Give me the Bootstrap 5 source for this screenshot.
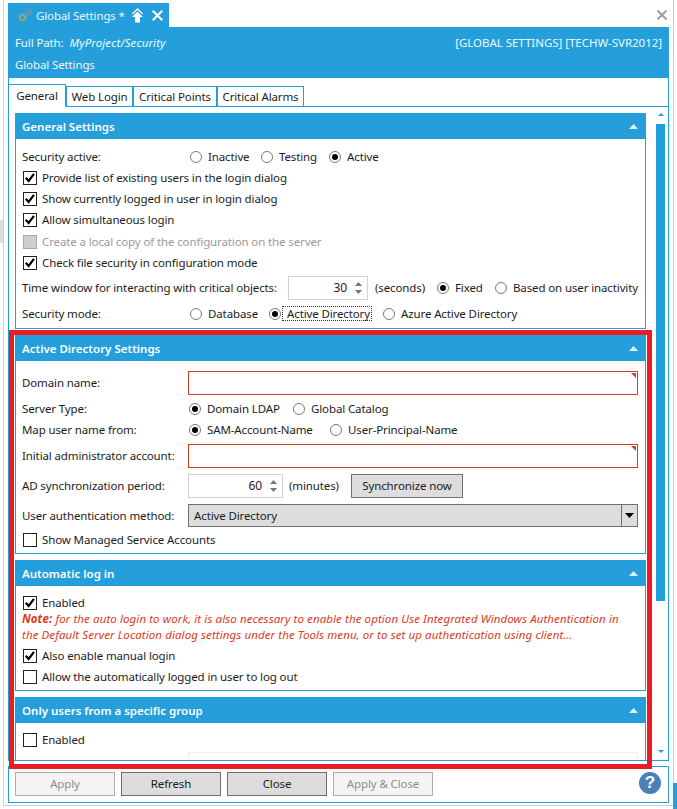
<!DOCTYPE html>
<html>
<head>
<title>Global Settings</title>
<link href="https://cdn.jsdelivr.net/npm/bootstrap@5.3.3/dist/css/bootstrap.min.css" rel="stylesheet">
<script src="https://cdn.jsdelivr.net/npm/bootstrap@5.3.3/dist/js/bootstrap.bundle.min.js"></script>
<style>
:root { --sky: #259fdb; }
html, body { width: 677px; height: 809px; overflow: hidden; background: #fff; }
body { font-family: "Noto Sans", "Open Sans", sans-serif; font-size: 11.5px; letter-spacing: -0.12px; color: #1c1c1c; position: relative; line-height: 16px; white-space: nowrap; }

.outer-wrap { margin-left: 3px; width: 671px; height: 806px; border-left: 1px solid #cfcfcf; border-right: 1px solid #cfcfcf; border-bottom: 1px solid #cfcfcf; padding-left: 4px; }
.frame { width: 661px; }

.top-strip { height: 27px; padding-top: 3px; }
.doc-tab { width: 161px; height: 24px; background: var(--sky); color: #e8f6fc; padding-left: 10px; gap: 4px; }
.doc-tab svg { flex: none; }
.doc-title { padding-top: 2px; }
.doc-up { margin-left: 2px; }
.doc-x { margin-left: 4px; }
.top-close { margin-right: 2px; margin-top: 7px; }

.path-band { height: 51px; background: var(--sky); color: #eef8fd; padding: 8px 7px 0 7px; }
.path-band .path-row { height: 16px; }
.path-band .path-name { margin-top: 6px; }
.path-val { font-style: italic; margin-left: 3px; letter-spacing: 0.1px; }
.path-tag { letter-spacing: -0.03px; }

.tab-shell { border-left: 1px solid var(--sky); border-right: 1px solid var(--sky); height: 683px; width: 661px; }
.nav-tabs.tab-strip { padding-top: 6px; height: 29px; border-bottom: 1px solid var(--sky); flex-wrap: nowrap; }
.tab-strip .nav-link { height: 21px; margin: 2px 0 -1px 0; padding: 1px 0 0 0; text-align: center; border: 1px solid var(--sky); border-radius: 0; color: #1c1c1c; background: #fff; line-height: 17px; }
.tab-strip .nav-link.active { height: 23px; margin-top: 0; color: #1c1c1c; border-color: var(--sky) var(--sky) #fff var(--sky); border-left: 0; padding: 2px 0 0 0; }
.tab-gen { width: 57px; }
.tab-web { width: 67px; }
.tab-pts { width: 84px; }
.tab-alm { width: 87px; }

.scroll-zone { height: 654px; border-bottom: 1px solid var(--sky); overflow: hidden; padding: 6px 0 0 6px; }
.sections { width: 631px; flex: none; }
.set-card { border-radius: 0; border: 1px solid var(--sky); margin-bottom: 6px; --bs-card-border-color: var(--sky); }
.set-head { height: 26px; margin: -1px -1px 0 -1px; background: var(--sky); color: #fff; font-weight: 600; padding: 1px 7px 0 7px; border-radius: 0; letter-spacing: 0; }
.set-head svg { margin-right: 1px; }
.set-body { padding: 7px 6px 0 6px; }
.ad-body { padding-top: 10px; height: 192px; }
.auto-body { height: 104px; padding-top: 6px; }
.group-body { height: 60px; padding-top: 6px; }
.gen-body { height: 189px; }

.line { height: 21px; }
.field-label { width: 166px; flex: none; }
.field-label-wide { width: 168px; flex: none; }
.field-label-mid { width: 167px; flex: none; }
.form-check-input[type=checkbox] { border-radius: 0; }
.form-check-input { border: 1px solid #222; width: 14px; height: 14px; margin: 0 5px 0 1px; background-color: #fff; flex: none; }
.form-check-input:checked { background-color: #fff; border-color: #222; }
.form-check-input:checked[type=checkbox] { --bs-form-check-bg-image: url("data:image/svg+xml,%3csvg xmlns='http://www.w3.org/2000/svg' viewBox='0 0 14 14'%3e%3cpath fill='none' stroke='%23000' stroke-width='2.2' d='M2.800 6.800l2.800 3.200L11 2.800'/%3e%3c/svg%3e"); background-size: 14px 14px; }
.form-check-input[type=radio] { width: 12px; height: 12px; border-radius: 50%; border-color: #7a7a7a; margin: 0 6px 0 0; }
.form-check-input:checked[type=radio] { border-color: #7a7a7a; --bs-form-check-bg-image: url("data:image/svg+xml,%3csvg xmlns='http://www.w3.org/2000/svg' viewBox='0 0 12 12'%3e%3ccircle cx='6' cy='6' r='3' fill='%23000'/%3e%3c/svg%3e"); background-size: 12px 12px; }
.form-check-input:disabled { background-color: #cfcfcf; border-color: #a8a8a8; opacity: 1; }
.muted-text { color: #9a9a9a; }
.radio-pick { display: flex; align-items: center; flex: none; }
.pick-68 { width: 68px; }
.pick-71 { width: 71px; }
.pick-58 { width: 58px; }
.pick-79 { width: 79px; }
.pick-114 { width: 114px; }
.pick-103 { width: 104px; }
.pick-140 { width: 141px; }
.dotted-pick { border: 1px dotted #333; height: 15px; line-height: 13px; padding: 0 0 0 4px; margin-left: -5px; width: 90px; }

.time-label { width: 266px; flex: none; }
.time-row { height: 24px; margin-top: 3px; }
.mode-row { height: 21px; margin-top: 3px; }
.drop-row { margin-top: 1px; }
.unit-sec { margin-left: 7px; width: 62px; flex: none; }
.unit-min { margin-left: 6px; width: 62px; flex: none; }
.num-box { border: 1px solid #d2d2d2; height: 24px; background: #fff; text-align: right; flex: none; }
.num-time { width: 80px; }
.num-sync { width: 95px; }
.num-val { flex: 1; padding-right: 5px; font-size: 12px; }
.spin-arrows { width: 15px; flex: none; gap: 4px; padding-right: 2px; }
.req-input { height: 24px; border: 1px solid #d43f1c; border-radius: 0; width: 450px; position: relative; background: #fff; }
.req-input::after { content: ""; position: absolute; top: 1px; right: 1px; border-top: 5px solid #d43f1c; border-left: 5px solid transparent; }
.sync-btn { width: 112px; height: 24px; padding: 0; font-size: 11.5px; background: #ddd; border: 1px solid #707070; border-radius: 0; color: #1c1c1c; line-height: 20px; letter-spacing: -0.12px; }
.pick-box { width: 450px; height: 23px; border: 1px solid #707070; background: #ddd; border-radius: 0; padding-left: 5px; }
.pick-arrow { width: 16px; height: 100%; border-left: 1px solid #707070; flex: none; }
.note-text { color: #dc3b22; font-style: italic; line-height: 16px; margin-top: -2px; margin-bottom: 2px; letter-spacing: 0.09px; }
.faded-input { margin: 2px 0 0 166px; width: 450px; height: 24px; border: 1px solid #eee; }
.gap-2px { margin-top: 2px; }
.gap-3px { margin-top: 3px; }
.gap-4px { margin-top: 4px; }
.gap-6px { margin-top: 6px; }

.scroll-rail { width: 9px; margin-left: 10px; margin-top: 0; }
.rail-up, .rail-down { width: 0; height: 0; border-left: 3px solid transparent; border-right: 3px solid transparent; margin: 0 auto; }
.rail-up { border-bottom: 3px solid var(--sky); margin-top: 0; }
.rail-thumb { width: 9px; height: 477px; background: var(--sky); margin-top: 8px; }
.rail-down { border-top: 3px solid var(--sky); margin-top: 149px; }

.foot-bar { margin-top: 5px; height: 37px; border: 1px solid var(--sky); padding: 5px 0 0 6px; gap: 6px; width: 661px; }
.foot-btn { width: 100px; height: 24px; padding: 0; border-radius: 0; font-size: 11.5px; letter-spacing: -0.12px; background: #ddd; border: 1px solid #707070; color: #1c1c1c; line-height: 20px; }
.foot-btn:disabled { background: #f4f4f4; border-color: #adadad; color: #8c8c8c; opacity: 1; }
.help-dot { width: 22px; height: 22px; border-radius: 50%; background: #4a7fb8; color: #fff; font-weight: 700; font-size: 17px; line-height: 22px; text-align: center; margin-left: auto; margin-right: 7px; font-family: "Liberation Sans", sans-serif; }

.red-mark { position: absolute; left: 9px; top: 330px; width: 643px; height: 439px; border: 5px solid #ed1c24; pointer-events: none; }
.edge-grey { position: absolute; left: 0; top: 220px; width: 3px; height: 23px; background: #dcdcdc; }
.edge-blue { position: absolute; left: 673px; top: 783px; width: 4px; height: 26px; background: var(--sky); }
</style>
</head>
<body>
<div class="outer-wrap">
  <div class="frame">
    <div class="top-strip d-flex justify-content-between">
      <div class="doc-tab d-flex align-items-center">
        <svg width="14" height="14" viewBox="0 0 14 14"><circle cx="4.500" cy="9.500" r="2.800" fill="none" stroke="#c9a24a" stroke-width="2.400" stroke-dasharray="1.500 0.700"/><circle cx="10.500" cy="4" r="2.300" fill="none" stroke="#8a8f96" stroke-width="2" stroke-dasharray="1.300 0.600"/></svg>
        <span class="doc-title">Global Settings *</span>
        <svg class="doc-up" width="13" height="15" viewBox="0 0 13 15"><path fill="#fff" d="M6.500 0L12.500 6H10.800L6.500 2 2.200 6H.5zM6.500 3.500L12 9H9v5.500H4V9H1z"/></svg>
        <svg class="doc-x" width="11" height="11" viewBox="0 0 11 11"><path stroke="#fff" stroke-width="2" d="M.7.700l9.600 9.600M10.300.700L.7 10.300"/></svg>
      </div>
      <svg class="top-close" width="10" height="10" viewBox="0 0 10 10"><path stroke="#a0a0a0" stroke-width="2" d="M.5.500l9 9M9.500.500l-9 9"/></svg>
    </div>

    <div class="path-band">
      <div class="path-row d-flex justify-content-between">
        <div>Full Path: <span class="path-val">MyProject/Security</span></div>
        <div class="path-tag">[GLOBAL SETTINGS] [TECHW-SVR2012]</div>
      </div>
      <div class="path-row path-name">Global Settings</div>
    </div>

    <div class="tab-shell">
      <ul class="nav nav-tabs tab-strip">
        <li class="nav-item"><a class="nav-link tab-gen active" href="#">General</a></li>
        <li class="nav-item"><a class="nav-link tab-web" href="#">Web Login</a></li>
        <li class="nav-item"><a class="nav-link tab-pts" href="#">Critical Points</a></li>
        <li class="nav-item"><a class="nav-link tab-alm" href="#">Critical Alarms</a></li>
      </ul>

      <div class="scroll-zone d-flex">
        <div class="sections">

          <div class="card set-card">
            <div class="set-head d-flex align-items-center justify-content-between"><span>General Settings</span><svg width="9" height="5" viewBox="0 0 9 5"><path fill="#dff1fa" d="M4.500 0L9 5H0z"/></svg></div>
            <div class="set-body gen-body">
              <div class="line d-flex align-items-center">
                <div class="field-label-wide">Security active:</div>
                <label class="radio-pick pick-71"><input class="form-check-input" type="radio" name="sa">Inactive</label>
                <label class="radio-pick pick-68"><input class="form-check-input" type="radio" name="sa">Testing</label>
                <label class="radio-pick"><input class="form-check-input" type="radio" name="sa" checked>Active</label>
              </div>
              <div class="line d-flex align-items-center"><input class="form-check-input" type="checkbox" checked><span>Provide list of existing users in the login dialog</span></div>
              <div class="line d-flex align-items-center"><input class="form-check-input" type="checkbox" checked><span>Show currently logged in user in login dialog</span></div>
              <div class="line d-flex align-items-center"><input class="form-check-input" type="checkbox" checked><span>Allow simultaneous login</span></div>
              <div class="line drop-row d-flex align-items-center"><input class="form-check-input" type="checkbox" disabled><span class="muted-text">Create a local copy of the configuration on the server</span></div>
              <div class="line d-flex align-items-center"><input class="form-check-input" type="checkbox" checked><span>Check file security in configuration mode</span></div>
              <div class="time-row d-flex align-items-center">
                <div class="time-label">Time window for interacting with critical objects:</div>
                <div class="num-box num-time d-flex align-items-center"><span class="num-val">30</span>
                  <div class="spin-arrows d-flex flex-column align-items-center"><svg width="7" height="4" viewBox="0 0 7 4"><path fill="#777" d="M3.500 0L7 4H0z"/></svg><svg width="7" height="4" viewBox="0 0 7 4"><path fill="#777" d="M0 0h7L3.500 4z"/></svg></div>
                </div>
                <div class="unit-sec">(seconds)</div>
                <label class="radio-pick pick-58"><input class="form-check-input" type="radio" name="tw" checked>Fixed</label>
                <label class="radio-pick"><input class="form-check-input" type="radio" name="tw">Based on user inactivity</label>
              </div>
              <div class="mode-row d-flex align-items-center">
                <div class="field-label-wide">Security mode:</div>
                <label class="radio-pick pick-79"><input class="form-check-input" type="radio" name="sm">Database</label>
                <label class="radio-pick pick-114"><input class="form-check-input" type="radio" name="sm" checked><span class="dotted-pick">Active Directory</span></label>
                <label class="radio-pick"><input class="form-check-input" type="radio" name="sm">Azure Active Directory</label>
              </div>
            </div>
          </div>

          <div class="card set-card">
            <div class="set-head d-flex align-items-center justify-content-between"><span>Active Directory Settings</span><svg width="9" height="5" viewBox="0 0 9 5"><path fill="#dff1fa" d="M4.500 0L9 5H0z"/></svg></div>
            <div class="set-body ad-body">
              <div class="d-flex align-items-center"><div class="field-label">Domain name:</div><div class="req-input"></div></div>
              <div class="line d-flex align-items-center gap-3px">
                <div class="field-label-mid">Server Type:</div>
                <label class="radio-pick pick-103"><input class="form-check-input" type="radio" name="st" checked>Domain LDAP</label>
                <label class="radio-pick"><input class="form-check-input" type="radio" name="st">Global Catalog</label>
              </div>
              <div class="line d-flex align-items-center">
                <div class="field-label-mid">Map user name from:</div>
                <label class="radio-pick pick-140"><input class="form-check-input" type="radio" name="mu" checked>SAM-Account-Name</label>
                <label class="radio-pick"><input class="form-check-input" type="radio" name="mu">User-Principal-Name</label>
              </div>
              <div class="d-flex align-items-center gap-4px"><div class="field-label">Initial administrator account:</div><div class="req-input"></div></div>
              <div class="d-flex align-items-center gap-6px">
                <div class="field-label">AD synchronization period:</div>
                <div class="num-box num-sync d-flex align-items-center"><span class="num-val">60</span>
                  <div class="spin-arrows d-flex flex-column align-items-center"><svg width="7" height="4" viewBox="0 0 7 4"><path fill="#777" d="M3.500 0L7 4H0z"/></svg><svg width="7" height="4" viewBox="0 0 7 4"><path fill="#777" d="M0 0h7L3.500 4z"/></svg></div>
                </div>
                <div class="unit-min">(minutes)</div>
                <button type="button" class="btn sync-btn">Synchronize now</button>
              </div>
              <div class="d-flex align-items-center gap-6px">
                <div class="field-label">User authentication method:</div>
                <div class="pick-box d-flex align-items-center justify-content-between"><span>Active Directory</span><div class="pick-arrow d-flex align-items-center justify-content-center"><svg width="9" height="5" viewBox="0 0 9 5"><path fill="#000" d="M0 0h9L4.500 5z"/></svg></div></div>
              </div>
              <div class="line d-flex align-items-center gap-2px"><input class="form-check-input" type="checkbox"><span>Show Managed Service Accounts</span></div>
            </div>
          </div>

          <div class="card set-card">
            <div class="set-head d-flex align-items-center justify-content-between"><span>Automatic log in</span><svg width="9" height="5" viewBox="0 0 9 5"><path fill="#dff1fa" d="M4.500 0L9 5H0z"/></svg></div>
            <div class="set-body auto-body">
              <div class="line d-flex align-items-center"><input class="form-check-input" type="checkbox" checked><span>Enabled</span></div>
              <div class="note-text"><strong>Note:</strong> for the auto login to work, it is also necessary to enable the option Use Integrated Windows Authentication in<br>the Default Server Location dialog settings under the Tools menu, or to set up authentication using client...</div>
              <div class="line d-flex align-items-center"><input class="form-check-input" type="checkbox" checked><span>Also enable manual login</span></div>
              <div class="line d-flex align-items-center"><input class="form-check-input" type="checkbox"><span>Allow the automatically logged in user to log out</span></div>
            </div>
          </div>

          <div class="card set-card mb-0">
            <div class="set-head d-flex align-items-center justify-content-between"><span>Only users from a specific group</span><svg width="9" height="5" viewBox="0 0 9 5"><path fill="#dff1fa" d="M4.500 0L9 5H0z"/></svg></div>
            <div class="set-body group-body">
              <div class="line d-flex align-items-center"><input class="form-check-input" type="checkbox"><span>Enabled</span></div>
              <div class="faded-input"></div>
            </div>
          </div>
        </div>

        <div class="scroll-rail">
          <div class="rail-up"></div>
          <div class="rail-thumb"></div>
          <div class="rail-down"></div>
        </div>
      </div>
    </div>

    <div class="foot-bar d-flex">
      <button type="button" class="btn foot-btn" disabled>Apply</button>
      <button type="button" class="btn foot-btn">Refresh</button>
      <button type="button" class="btn foot-btn">Close</button>
      <button type="button" class="btn foot-btn" disabled>Apply &amp; Close</button>
      <div class="help-dot">?</div>
    </div>
  </div>
</div>
<div class="red-mark"></div>
<div class="edge-grey"></div>
<div class="edge-blue"></div>
</body>
</html>
